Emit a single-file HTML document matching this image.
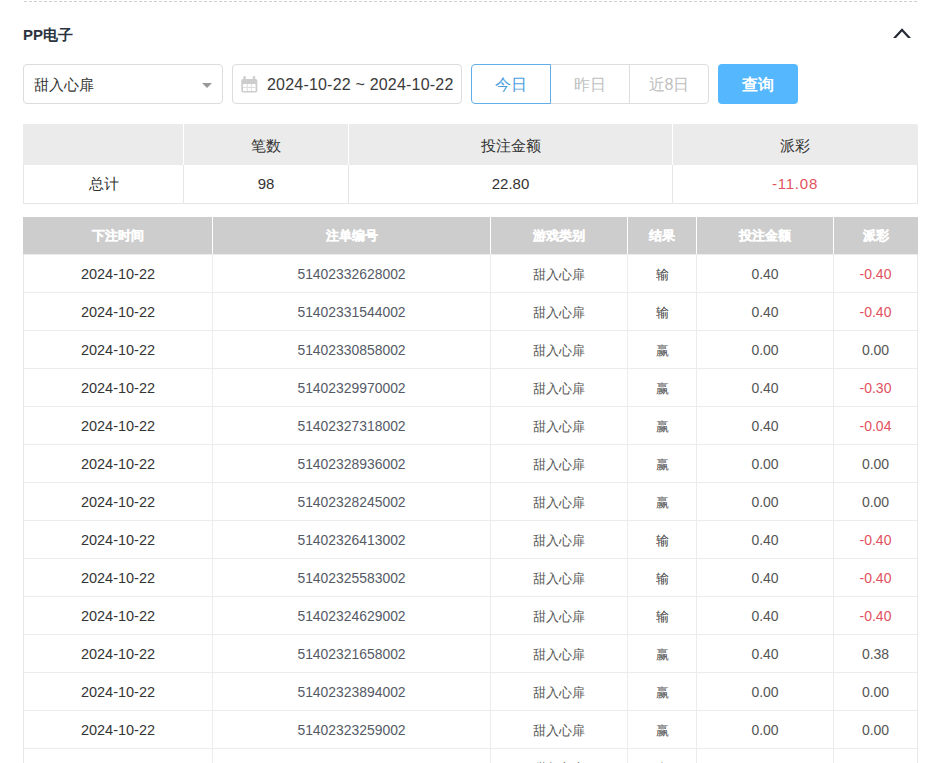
<!DOCTYPE html>
<html><head><meta charset="utf-8">
<style>
*,*:before,*:after{margin:0;padding:0;box-sizing:border-box}
html,body{width:947px;height:763px;overflow:hidden;background:#fff;font-family:"Liberation Sans",sans-serif;color:#333;position:relative}
div{position:absolute}
.dash{left:24px;top:1px;width:895px;height:1px;background:repeating-linear-gradient(to right,#cfcfcf 0 3px,transparent 3px 5px)}
.title{left:23px;top:26px;font-size:15px;font-weight:bold;color:#2b3340;line-height:18px;white-space:nowrap}
.chev{position:absolute;left:890px;top:25px}
.sel{left:23px;top:64px;width:200px;height:40px;border:1px solid #dcdcdc;border-radius:4px}
.sel span{position:absolute;left:10px;top:10px;font-size:15px;line-height:20px;color:#333}
.sel i{position:absolute;left:178px;top:18px;width:0;height:0;border-left:5.5px solid transparent;border-right:5.5px solid transparent;border-top:5.5px solid #999}
.date{left:232px;top:64px;width:230px;height:40px;border:1px solid #dcdcdc;border-radius:4px}
.date span{position:absolute;left:34px;top:10px;font-size:16px;line-height:20px;color:#3a3a3a;white-space:nowrap;letter-spacing:0.2px}
.date svg{position:absolute;left:8px;top:11px}
.bg{top:64px;height:40px;border:1px solid #dedede;font-size:16px;line-height:40px;text-align:center;color:#c0c0c0}
.b1{left:471px;width:80px;border-color:#62aee8;color:#4a9ee0;border-radius:4px 0 0 4px;z-index:2}
.b2{left:550px;width:80px}
.b3{left:629px;width:80px;border-radius:0 4px 4px 0}
.q{left:718px;top:64px;width:80px;height:40px;background:#55b7fe;border-radius:4px;color:#fff;font-size:16px;line-height:41px;text-align:center;font-weight:bold}
.sum{left:23px;top:124px;width:895px;height:80px;border:1px solid #e6e6e6;border-top:0;border-radius:0 3px 0 0}
.sum:before{content:"";position:absolute;left:-1px;right:-1px;top:0;height:41px;background:#ebebeb;border-radius:0 3px 0 0}
.svl{top:0;width:1px;height:79px;background:#e6e6e6;margin-left:-24px}
.svh{top:0;width:1px;height:41px;background:#fff;margin-left:-24px;z-index:1}
.sh{top:0;height:41px;line-height:43px;text-align:center;font-size:15px;color:#333;margin-left:-24px;z-index:2}
.sb{top:41px;height:38px;line-height:38px;text-align:center;font-size:15px;color:#333;margin-left:-24px}
.main{left:0;top:0;width:947px;height:763px}
.main:before{content:"";position:absolute;left:23px;top:217px;width:895px;height:37px;background:#cdcdcd}
.main:after{content:"";position:absolute;left:23px;top:254px;width:895px;height:520px;border-left:1px solid #e8e8e8;border-right:1px solid #e8e8e8}
.mh{top:217px;height:37px;line-height:37px;text-align:center;font-size:13px;font-weight:bold;color:#fff;z-index:2;-webkit-text-stroke:0.3px #fff}
.mhl{top:217px;height:37px;width:1px;background:#fff;z-index:1}
.mvl{top:254px;height:520px;width:1px;background:#ececec}
.hl{left:23px;width:895px;height:1px;background:#ececec}
.td{height:37px;line-height:39px;text-align:center;font-size:14px;color:#333}
.c0{color:#353535;font-size:14.5px}.c1{color:#555a66;font-size:13.9px}.c2{color:#555;font-size:13px}.c3{color:#444;font-size:13px}.c4{color:#555}.c5{color:#555}
.c3.win{color:#5a5a5a}
.red{color:#e2515e !important}
.sb.red{letter-spacing:0.8px}
</style></head><body>
<div class="dash"></div>
<div class="title">PP电子</div>
<svg class="chev" width="24" height="16" viewBox="0 0 24 16"><path d="M3 13 L12 3.3 L21 13 L18 13 L12 6.5 L6 13 Z" fill="#262a36"/></svg>
<div class="sel"><span>甜入心扉</span><i></i></div>
<div class="date"><svg width="18" height="18" viewBox="0 0 18 18"><g fill="#cdcdcd"><rect x="2.4" y="0" width="2.4" height="5" rx="1"/><rect x="11.8" y="0" width="2.4" height="5" rx="1"/><rect x="0.3" y="3" width="16" height="13.4" rx="1.6"/></g><rect x="2" y="8" width="12.6" height="7" fill="#fff"/><g fill="#dedede"><rect x="2" y="11" width="12.6" height="1"/><rect x="5.8" y="8" width="1" height="7"/><rect x="9.8" y="8" width="1" height="7"/></g></svg><span>2024-10-22 ~ 2024-10-22</span></div>
<div class="bg b1">今日</div><div class="bg b2">昨日</div><div class="bg b3">近8日</div>
<div class="q">查询</div>
<div class="sum">
<div class="svl" style="left:183px"></div><div class="svh" style="left:183px"></div><div class="svl" style="left:348px"></div><div class="svh" style="left:348px"></div><div class="svl" style="left:672px"></div><div class="svh" style="left:672px"></div>
<div class="sh" style="left:24px;width:159px"></div><div class="sh" style="left:184px;width:164px">笔数</div><div class="sh" style="left:349px;width:323px">投注金额</div><div class="sh" style="left:673px;width:244px">派彩</div>
<div class="sb" style="left:24px;width:159px">总计</div><div class="sb" style="left:184px;width:164px">98</div><div class="sb" style="left:349px;width:323px">22.80</div><div class="sb red" style="left:673px;width:244px">-11.08</div>
</div>
<div class="main">
<div class="mh" style="left:24px;width:188px">下注时间</div><div class="mh" style="left:213px;width:277px">注单编号</div><div class="mh" style="left:491px;width:136px">游戏类别</div><div class="mh" style="left:628px;width:68px">结果</div><div class="mh" style="left:697px;width:136px">投注金额</div><div class="mh" style="left:834px;width:83px">派彩</div>
<div class="mhl" style="left:212px"></div><div class="mvl" style="left:212px"></div><div class="mhl" style="left:490px"></div><div class="mvl" style="left:490px"></div><div class="mhl" style="left:627px"></div><div class="mvl" style="left:627px"></div><div class="mhl" style="left:696px"></div><div class="mvl" style="left:696px"></div><div class="mhl" style="left:833px"></div><div class="mvl" style="left:833px"></div>
<div class="hl" style="top:254px"></div><div class="td c0" style="left:24px;width:188px;top:255px">2024-10-22</div><div class="td c1" style="left:213px;width:277px;top:255px">51402332628002</div><div class="td c2" style="left:491px;width:136px;top:255px">甜入心扉</div><div class="td c3" style="left:628px;width:68px;top:255px">输</div><div class="td c4" style="left:697px;width:136px;top:255px">0.40</div><div class="td c5 red" style="left:834px;width:83px;top:255px">-0.40</div>
<div class="hl" style="top:292px"></div><div class="td c0" style="left:24px;width:188px;top:293px">2024-10-22</div><div class="td c1" style="left:213px;width:277px;top:293px">51402331544002</div><div class="td c2" style="left:491px;width:136px;top:293px">甜入心扉</div><div class="td c3" style="left:628px;width:68px;top:293px">输</div><div class="td c4" style="left:697px;width:136px;top:293px">0.40</div><div class="td c5 red" style="left:834px;width:83px;top:293px">-0.40</div>
<div class="hl" style="top:330px"></div><div class="td c0" style="left:24px;width:188px;top:331px">2024-10-22</div><div class="td c1" style="left:213px;width:277px;top:331px">51402330858002</div><div class="td c2" style="left:491px;width:136px;top:331px">甜入心扉</div><div class="td c3 win" style="left:628px;width:68px;top:331px">赢</div><div class="td c4" style="left:697px;width:136px;top:331px">0.00</div><div class="td c5" style="left:834px;width:83px;top:331px">0.00</div>
<div class="hl" style="top:368px"></div><div class="td c0" style="left:24px;width:188px;top:369px">2024-10-22</div><div class="td c1" style="left:213px;width:277px;top:369px">51402329970002</div><div class="td c2" style="left:491px;width:136px;top:369px">甜入心扉</div><div class="td c3 win" style="left:628px;width:68px;top:369px">赢</div><div class="td c4" style="left:697px;width:136px;top:369px">0.40</div><div class="td c5 red" style="left:834px;width:83px;top:369px">-0.30</div>
<div class="hl" style="top:406px"></div><div class="td c0" style="left:24px;width:188px;top:407px">2024-10-22</div><div class="td c1" style="left:213px;width:277px;top:407px">51402327318002</div><div class="td c2" style="left:491px;width:136px;top:407px">甜入心扉</div><div class="td c3 win" style="left:628px;width:68px;top:407px">赢</div><div class="td c4" style="left:697px;width:136px;top:407px">0.40</div><div class="td c5 red" style="left:834px;width:83px;top:407px">-0.04</div>
<div class="hl" style="top:444px"></div><div class="td c0" style="left:24px;width:188px;top:445px">2024-10-22</div><div class="td c1" style="left:213px;width:277px;top:445px">51402328936002</div><div class="td c2" style="left:491px;width:136px;top:445px">甜入心扉</div><div class="td c3 win" style="left:628px;width:68px;top:445px">赢</div><div class="td c4" style="left:697px;width:136px;top:445px">0.00</div><div class="td c5" style="left:834px;width:83px;top:445px">0.00</div>
<div class="hl" style="top:482px"></div><div class="td c0" style="left:24px;width:188px;top:483px">2024-10-22</div><div class="td c1" style="left:213px;width:277px;top:483px">51402328245002</div><div class="td c2" style="left:491px;width:136px;top:483px">甜入心扉</div><div class="td c3 win" style="left:628px;width:68px;top:483px">赢</div><div class="td c4" style="left:697px;width:136px;top:483px">0.00</div><div class="td c5" style="left:834px;width:83px;top:483px">0.00</div>
<div class="hl" style="top:520px"></div><div class="td c0" style="left:24px;width:188px;top:521px">2024-10-22</div><div class="td c1" style="left:213px;width:277px;top:521px">51402326413002</div><div class="td c2" style="left:491px;width:136px;top:521px">甜入心扉</div><div class="td c3" style="left:628px;width:68px;top:521px">输</div><div class="td c4" style="left:697px;width:136px;top:521px">0.40</div><div class="td c5 red" style="left:834px;width:83px;top:521px">-0.40</div>
<div class="hl" style="top:558px"></div><div class="td c0" style="left:24px;width:188px;top:559px">2024-10-22</div><div class="td c1" style="left:213px;width:277px;top:559px">51402325583002</div><div class="td c2" style="left:491px;width:136px;top:559px">甜入心扉</div><div class="td c3" style="left:628px;width:68px;top:559px">输</div><div class="td c4" style="left:697px;width:136px;top:559px">0.40</div><div class="td c5 red" style="left:834px;width:83px;top:559px">-0.40</div>
<div class="hl" style="top:596px"></div><div class="td c0" style="left:24px;width:188px;top:597px">2024-10-22</div><div class="td c1" style="left:213px;width:277px;top:597px">51402324629002</div><div class="td c2" style="left:491px;width:136px;top:597px">甜入心扉</div><div class="td c3" style="left:628px;width:68px;top:597px">输</div><div class="td c4" style="left:697px;width:136px;top:597px">0.40</div><div class="td c5 red" style="left:834px;width:83px;top:597px">-0.40</div>
<div class="hl" style="top:634px"></div><div class="td c0" style="left:24px;width:188px;top:635px">2024-10-22</div><div class="td c1" style="left:213px;width:277px;top:635px">51402321658002</div><div class="td c2" style="left:491px;width:136px;top:635px">甜入心扉</div><div class="td c3 win" style="left:628px;width:68px;top:635px">赢</div><div class="td c4" style="left:697px;width:136px;top:635px">0.40</div><div class="td c5" style="left:834px;width:83px;top:635px">0.38</div>
<div class="hl" style="top:672px"></div><div class="td c0" style="left:24px;width:188px;top:673px">2024-10-22</div><div class="td c1" style="left:213px;width:277px;top:673px">51402323894002</div><div class="td c2" style="left:491px;width:136px;top:673px">甜入心扉</div><div class="td c3 win" style="left:628px;width:68px;top:673px">赢</div><div class="td c4" style="left:697px;width:136px;top:673px">0.00</div><div class="td c5" style="left:834px;width:83px;top:673px">0.00</div>
<div class="hl" style="top:710px"></div><div class="td c0" style="left:24px;width:188px;top:711px">2024-10-22</div><div class="td c1" style="left:213px;width:277px;top:711px">51402323259002</div><div class="td c2" style="left:491px;width:136px;top:711px">甜入心扉</div><div class="td c3 win" style="left:628px;width:68px;top:711px">赢</div><div class="td c4" style="left:697px;width:136px;top:711px">0.00</div><div class="td c5" style="left:834px;width:83px;top:711px">0.00</div>
<div class="hl" style="top:748px"></div><div class="td c0" style="left:24px;width:188px;top:749px">2024-10-22</div><div class="td c1" style="left:213px;width:277px;top:749px">51402322000002</div><div class="td c2" style="left:491px;width:136px;top:749px">甜入心扉</div><div class="td c3 win" style="left:628px;width:68px;top:749px">赢</div><div class="td c4" style="left:697px;width:136px;top:749px">0.00</div><div class="td c5" style="left:834px;width:83px;top:749px">0.00</div>
</div>
</body></html>
